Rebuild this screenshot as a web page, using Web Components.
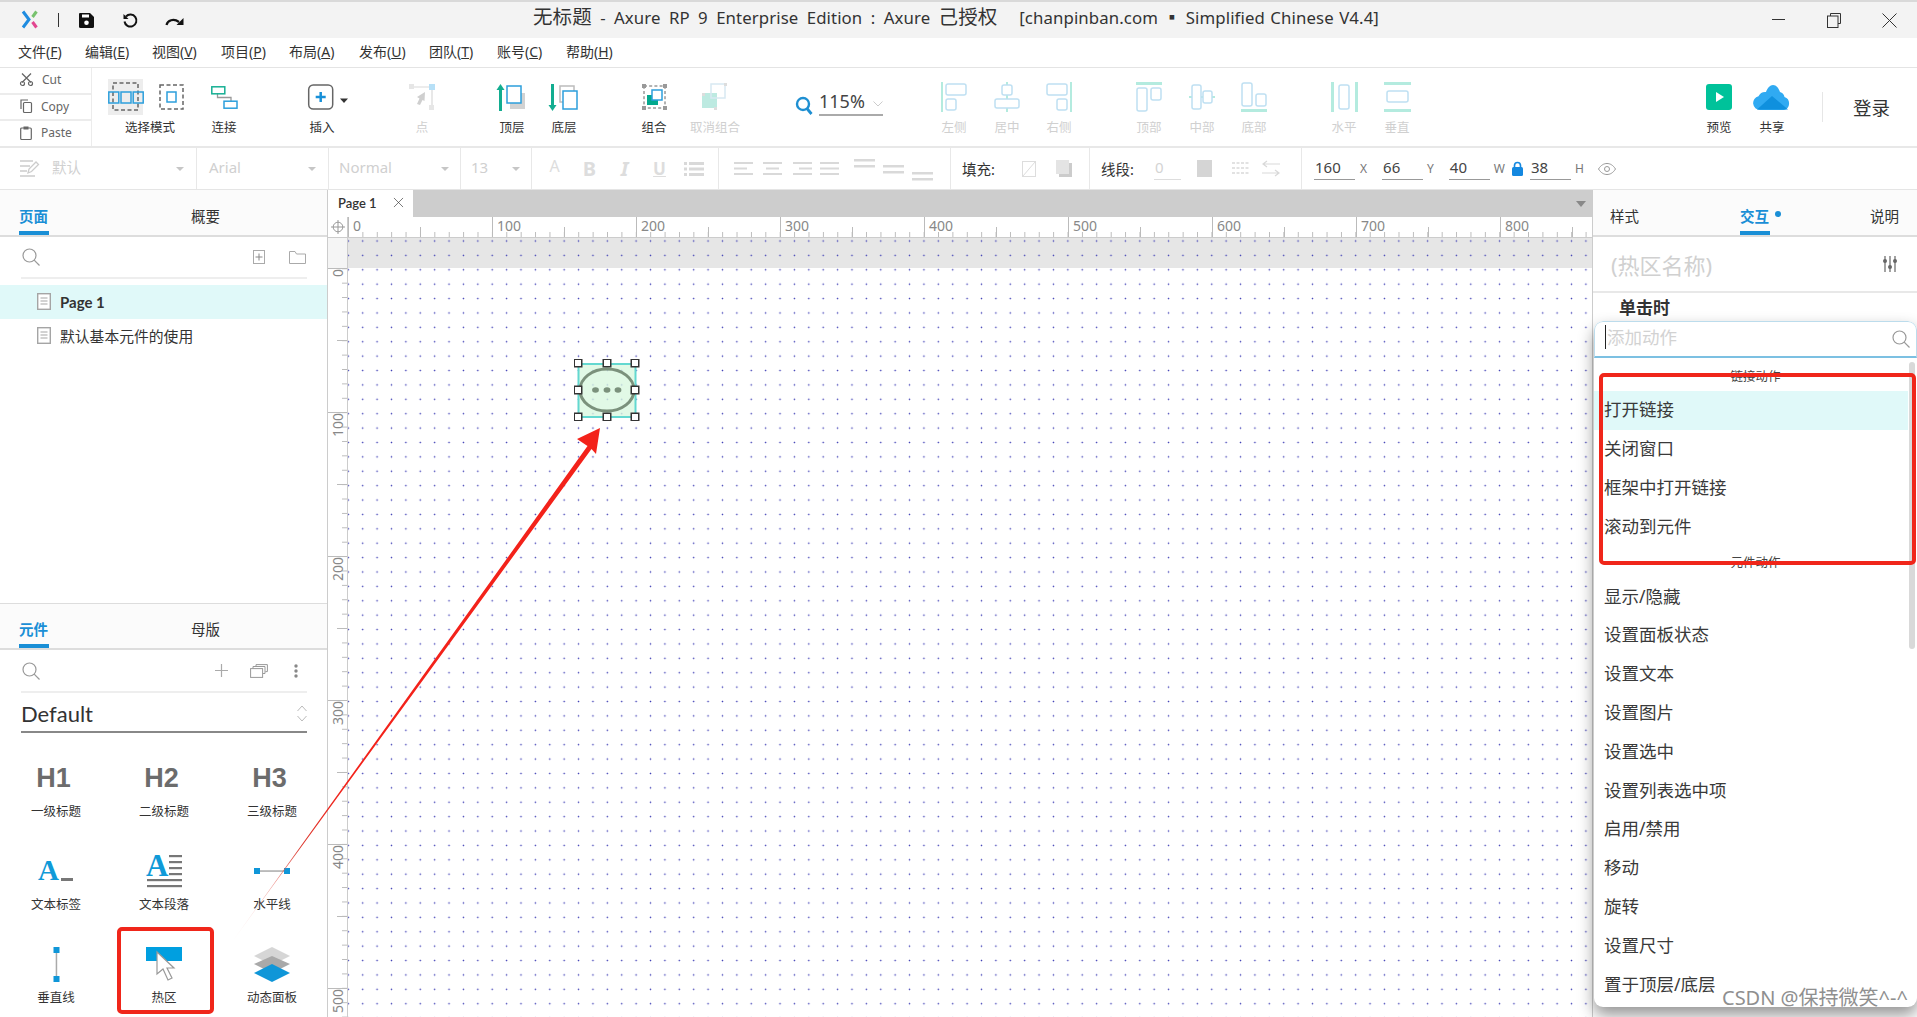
<!DOCTYPE html>
<html lang="zh-CN">
<head>
<meta charset="UTF-8">
<title>Axure RP 9</title>
<style>
  html, body { margin: 0; height: 100%; }
  body {
    width: 1917px; height: 1017px; overflow: hidden; background: #fff; position: relative;
    display: flex; flex-direction: column; color: #333;
    font-family: "Noto Sans", "Noto Sans CJK SC", sans-serif;
  }
  ax-main { flex: 1; min-height: 0; }
</style>
</head>
<body>
  <ax-titlebar></ax-titlebar>
  <ax-menubar></ax-menubar>
  <ax-toolbar></ax-toolbar>
  <ax-formatbar></ax-formatbar>
  <ax-main>
    <ax-left></ax-left>
    <ax-canvas></ax-canvas>
    <ax-right></ax-right>
  </ax-main>
  <ax-overlay></ax-overlay>

<script>
// icons: [width, height, svg body]
const T = '#b4ebdf', B = '#bfe0f2', G = '#d9d9d9';
const rect = (x, y, w, h, c, r = 1.5) => `<rect x="${x}" y="${y}" width="${w}" height="${h}" rx="${r}" fill="none" stroke="${c}" stroke-width="1.5"/>`;
const bar = (x, y, w, h, c) => `<rect x="${x}" y="${y}" width="${w}" height="${h}" fill="${c}"/>`;
const lines = (x, w, ys, c, t = 2) => ys.map(y => bar(x, y, w, t, c)).join('');
const ICONS = {
  logo: [17, 19, `<path d="M2 1.500 8 9.500 2 17.500" fill="none" stroke="#1f8ce0" stroke-width="3"/><path d="M15.500 1.500 11.500 7" stroke="#77c26e" stroke-width="3"/><path d="M11.500 12 15.500 17.500" stroke="#e2458f" stroke-width="3"/>`],
  save: [15, 15, `<path d="M1 0h10l4 4v9.500a1.500 1.500 0 0 1-1.500 1.500h-12A1.500 1.500 0 0 1 0 13.500V1a1 1 0 0 1 1-1z" fill="#111"/><rect x="3" y="1.500" width="7" height="3" fill="#fff"/><circle cx="7.500" cy="9.800" r="2.300" fill="#fff"/>`],
  undo: [16, 15, `<path d="M4 3.500a6 6 0 1 1-1.500 5" fill="none" stroke="#111" stroke-width="2"/><path d="M1.500 1v5h5z" fill="#111"/>`],
  redo: [19, 10, `<path d="M1.500 9c1-4.500 7-7 12.500-3" fill="none" stroke="#111" stroke-width="2.200"/><path d="M18.500 2v7h-7z" fill="#111"/>`],
  min: [13, 2, bar(0, 0, 13, 1, '#333')],
  max: [14, 15, `<path d="M3.500 3V.5h10v10H11" fill="none" stroke="#333"/><rect x=".5" y="3" width="10.500" height="11.500" fill="none" stroke="#333"/>`],
  close: [15, 15, `<path d="M.5.500l14 14M14.500.500l-14 14" stroke="#333"/>`],
  cut: [13, 13, `<path d="M2 .5l9 9M11 .5l-9 9" stroke="#666" stroke-width="1.300"/><circle cx="2.500" cy="10.500" r="2" fill="none" stroke="#666" stroke-width="1.200"/><circle cx="10.500" cy="10.500" r="2" fill="none" stroke="#666" stroke-width="1.200"/>`],
  copy: [12, 14, `<path d="M1 10V1h7" fill="none" stroke="#666" stroke-width="1.200"/><rect x="3.500" y="3.500" width="8" height="10" rx="1" fill="none" stroke="#666" stroke-width="1.200"/>`],
  paste: [12, 14, `<rect x=".7" y="2" width="10.600" height="11.500" rx="1" fill="none" stroke="#666" stroke-width="1.200"/><rect x="3.500" y=".5" width="5" height="3" fill="#666"/>`],
  selectA: [36, 30, `<rect x="5" y="1" width="25" height="27" fill="none" stroke="#666" stroke-width="1.500" stroke-dasharray="4 2.500"/>${rect(.8, 10, 10, 11, '#2c9fdc', 0)}${rect(13, 10, 10, 11, '#2c9fdc', 0)}${rect(25.200, 10, 10, 11, '#2c9fdc', 0)}`],
  selectB: [25, 26, `<rect x="1" y="1" width="23" height="24" fill="none" stroke="#666" stroke-width="1.500" stroke-dasharray="4 2.500"/>${rect(8, 8, 9, 10, '#2c9fdc', 0)}`],
  connect: [27, 23, `<path d="M6.500 7v4.500H20V16" fill="none" stroke="#999" stroke-width="1.300"/>${rect(.8, .8, 13, 7, '#17b094', 0)}${rect(13, 15.200, 13, 7, '#2c9fdc', 0)}`],
  insert: [52, 26, `<rect x="12.700" y="1" width="24" height="24" rx="4.500" fill="none" stroke="#666" stroke-width="1.500"/><path d="M24.700 8v10M19.700 13h10" stroke="#1890d8" stroke-width="2.500"/><path d="M44 14.500h8l-4 4.500z" fill="#333"/>`],
  point: [26, 26, `<path d="M3 3h20v20" fill="none" stroke="${G}" stroke-width="1.200"/>${bar(0, 0, 5, 5, '#e6e6e6')}${bar(20, 0, 6, 6, '#b7e0f7')}${bar(20, 21, 5, 5, '#e6e6e6')}<path d="M16 8 8 13l2.500 1.500L8 20l3 1 2.500-5 2 1z" fill="#cfcfcf"/>`],
  front: [28, 27, `${bar(1, 5, 3, 22, '#12ad90')}<path d="M2.500 0l4 6h-8z" fill="#12ad90"/><rect x="12" y="9" width="15" height="16" fill="#d2d2d2"/>${bar(9, 2, 14, 17, '#fff')}${rect(9, 2, 14, 17, '#2c9fdc', 0)}`],
  back: [28, 27, `${bar(1, 0, 3, 22, '#12ad90')}<path d="M2.500 27l4-6h-8z" fill="#12ad90"/>${rect(10, 2, 14, 16, '#bcbcbc', 0)}${bar(13, 7, 14, 18, '#fff')}${rect(13, 7, 14, 18, '#2c9fdc', 0)}`],
  group: [25, 26, `<rect x="2" y="2" width="21" height="22" fill="none" stroke="#666" stroke-dasharray="3 2.200"/>${bar(0, 0, 4, 4, '#999')}${bar(21, 0, 4, 4, '#999')}${bar(0, 22, 4, 4, '#999')}${bar(21, 22, 4, 4, '#999')}${bar(5, 11, 11, 10, '#03a98e')}${bar(10, 6, 10, 10, '#fff')}${rect(10, 6, 10, 10, '#2c9fdc', 0)}`],
  ungroup: [26, 28, `${bar(0, 10, 15, 15, '#bdeae1')}${rect(9, 1, 14, 14, '#d8e9f2', 0)}${bar(0, 10, 3, 3, '#ddd')}${bar(22, 0, 3, 3, '#ddd')}${bar(12, 24, 3, 3, '#ddd')}`],
  zoom: [18, 19, `<circle cx="8" cy="8" r="6" fill="none" stroke="#1e8fd2" stroke-width="2.400"/><path d="M12 12.500l4.500 5.500" stroke="#1e8fd2" stroke-width="2.800"/>`],
  chev: [10, 6, `<path d="M.5.500l4.500 4.500 4.500-4.500" fill="none" stroke="#ccc"/>`],
  aLeft: [26, 30, `${bar(0, 0, 2, 30, T)}${rect(5, 2, 20, 11, B, 2)}${rect(5, 17, 10, 11, B, 2)}`],
  aCenter: [26, 30, `${bar(12, 0, 2, 30, T)}${bar(8, 3, 10, 10, '#fff')}${rect(8, 3, 10, 10, B, 2)}${bar(1, 17, 24, 9, '#fff')}${rect(1, 17, 24, 9, B, 2)}`],
  aRight: [26, 30, `${bar(24, 0, 2, 30, T)}${rect(1, 2, 20, 11, B, 2)}${rect(11, 17, 10, 11, B, 2)}`],
  aTop: [26, 30, `${bar(0, 0, 26, 3, T)}${rect(1, 6, 10, 23, B, 2)}${rect(15, 6, 10, 12, B, 2)}`],
  aMid: [26, 30, `${bar(0, 14, 26, 2, T)}${bar(3, 3, 9, 24, '#fff')}${rect(3, 3, 9, 24, B, 2)}${bar(14, 9, 9, 12, '#fff')}${rect(14, 9, 9, 12, B, 2)}`],
  aBottom: [26, 30, `${bar(0, 27, 26, 3, T)}${rect(1, 1, 10, 23, B, 2)}${rect(15, 12, 10, 12, B, 2)}`],
  dH: [27, 30, `${bar(0, 0, 3, 30, T)}${bar(24, 0, 3, 30, T)}${rect(8, 3, 10, 24, B, 2)}`],
  dV: [27, 30, `${bar(0, 0, 27, 3, T)}${bar(0, 27, 27, 3, T)}${rect(3, 9, 21, 11, B, 2)}`],
  preview: [26, 26, `<rect width="26" height="26" rx="3" fill="#00c29a"/><path d="M10 8l8 5-8 5z" fill="#fff"/>`],
  share: [38, 26, `<path d="M7 26a7 7 0 0 1-1.500-13.800A7.500 7.500 0 0 1 13 8c1.500-4 4-7 7-7 3.500 0 5.500 3 7 7a6.500 6.500 0 0 1 4.500 5 6.800 6.800 0 0 1-.5 13z" fill="#30aaf2"/><path d="M4 25.500 19 12l16 13.500z" fill="#0f90de"/>`],
  style: [19, 19, `<path d="M0 2h13M0 7h10M0 12h7M0 17h15" stroke="#ccc" stroke-width="1.300"/><path d="M8 14l1-4 7-7 2.500 2.500-7 7z" fill="none" stroke="#ccc" stroke-width="1.300"/>`],
  fList: [20, 16, `${bar(0, 1, 3, 3, G)}${bar(0, 6.500, 3, 3, G)}${bar(0, 12, 3, 3, G)}${lines(5, 15, [1, 6.500, 12], G, 3)}`],
  al1: [19, 16, lines(0, 19, [1, 12], G, 2) + bar(0, 6.500, 13, 2, G)],
  al2: [19, 16, lines(0, 19, [1, 12], G, 2) + bar(3, 6.500, 13, 2, G)],
  al3: [19, 16, lines(0, 19, [1, 12], G, 2) + bar(6, 6.500, 13, 2, G)],
  al4: [19, 16, lines(0, 19, [1, 6.500, 12], G, 2)],
  vt: [21, 22, lines(0, 21, [1, 7], G, 2.500)],
  vm: [21, 22, lines(0, 21, [7, 13], G, 2.500)],
  vb: [21, 22, lines(0, 21, [14, 20], G, 2.500)],
  noFill: [14, 16, `<rect x=".5" y=".5" width="13" height="15" fill="none" stroke="#ddd"/><path d="M1 15 13 1" stroke="#ddd"/>`],
  fill: [16, 17, `<rect x="3" y="3" width="13" height="14" fill="#ccc"/><rect width="13" height="14" fill="#e4e4e4"/>`],
  lineC: [15, 17, bar(0, 0, 15, 17, '#d5d5d5')],
  dash: [18, 14, `<path d="M0 1h18M0 6h18M0 11h18" stroke="${G}" stroke-width="1.300" stroke-dasharray="3 1.500"/>`],
  arrows: [18, 15, `<path d="M18 3H2m3-3L1 3l4 3M0 12h16m-3-3 4 3-4 3" fill="none" stroke="${G}" stroke-width="1.200"/>`],
  lock: [11, 15, `<path d="M2.500 7V4.500a3 3 0 0 1 6 0V7" fill="none" stroke="#1488e0" stroke-width="1.600"/><rect y="6" width="11" height="9" rx="1.500" fill="#1488e0"/>`],
  eye: [18, 12, `<path d="M.5 6C3 2 6 .5 9 .5S15 2 17.500 6C15 10 12 11.500 9 11.500S3 10 .5 6z" fill="none" stroke="#999"/><circle cx="9" cy="6" r="2.500" fill="none" stroke="#999"/>`],
  search: [18, 18, `<circle cx="7.500" cy="7.500" r="6.500" fill="none" stroke="#999" stroke-width="1.200"/><path d="M12.200 12.200 17.500 17.500" stroke="#999" stroke-width="1.200"/>`],
  pageAdd: [12, 14, `<rect x=".5" y=".5" width="11" height="13" fill="none" stroke="#aaa"/><path d="M6 3.500v7M2.500 7h7" stroke="#888"/>`],
  folder: [17, 13, `<path d="M.5 12.500V.5h5.500l1.500 2.500h9v9.500z" fill="none" stroke="#aaa"/>`],
  doc: [14, 17, `<rect x=".7" y=".7" width="12.600" height="15.600" fill="#fff" stroke="#a5a5a5" stroke-width="1.400"/><path d="M3.500 5h7M3.500 8h7M3.500 11h7" stroke="#a5a5a5"/>`],
  target: [14, 14, `<circle cx="7" cy="7" r="4.800" fill="none" stroke="#999"/><path d="M7 0v14M0 7h14" stroke="#999"/>`],
  plus: [13, 13, `<path d="M6.500 0v13M0 6.500h13" stroke="#aaa" stroke-width="1.200"/>`],
  stack: [18, 14, `<rect x=".6" y="4.600" width="12" height="8.800" fill="none" stroke="#999"/><path d="M3 4.500v-2h12v7h-2M6 2.500V.6h11.400v7h-2" fill="none" stroke="#999"/>`],
  dots: [4, 14, `<circle cx="2" cy="2" r="1.700" fill="#888"/><circle cx="2" cy="7" r="1.700" fill="#888"/><circle cx="2" cy="12" r="1.700" fill="#888"/>`],
  updown: [10, 17, `<path d="M.5 6 5 1l4.500 5M.5 11 5 16l4.500-5" fill="none" stroke="#bbb"/>`],
  wLabel: [36, 22, `<text x="0" y="20" font-family="Liberation Serif" font-weight="700" font-size="29" fill="#0f9ad8">A</text>${bar(23, 18, 12, 3, '#777')}`],
  wPara: [37, 35, `<text x="0" y="22" font-family="Liberation Serif" font-weight="700" font-size="31" fill="#0f9ad8">A</text>${lines(23, 13, [1, 7, 13, 19], '#777', 2.200)}${lines(1, 35, [25, 31], '#777', 2.200)}`],
  wHLine: [36, 8, `${bar(2, 3.300, 32, 1.500, '#aaa')}${bar(0, 1, 6, 6, '#0f96d8')}${bar(30, 1, 6, 6, '#0f96d8')}`],
  wVLine: [7, 35, `${bar(2.700, 3, 1.500, 29, '#aaa')}${bar(.5, 0, 6, 6, '#0f96d8')}${bar(.5, 29, 6, 6, '#0f96d8')}`],
  wHot: [36, 35, `${bar(0, 0, 36, 14, '#009fe0')}<path d="M11 5v22l6-5 5 11 4-2-5-10h7z" fill="#fff" stroke="#999" stroke-width="1.200"/>`],
  wPanel: [36, 35, `<path d="M18 0 36 9 18 18 0 9z" fill="#d6d6d6"/><path d="M18 9 36 17 18 26 0 17z" fill="#a9a9a9"/><path d="M18 17 36 26 18 35 0 26z" fill="#0f96d8"/>`],
  sliders: [14, 16, `<path d="M2 0v16M7 0v16M12 0v16" stroke="#666" stroke-width="1.200"/><circle cx="2" cy="5" r="2" fill="#666"/><circle cx="7" cy="11" r="2" fill="#666"/><circle cx="12" cy="5" r="2" fill="#666"/>`]
};

class AxIcon extends HTMLElement {
  connectedCallback() {
    const [w, h, body] = ICONS[this.getAttribute('name')];
    this.attachShadow({ mode: 'open' }).innerHTML =
      `<style>:host{display:inline-flex;flex:none;line-height:0}svg{overflow:visible}</style>
       <svg width="${w}" height="${h}" viewBox="0 0 ${w} ${h}">${body}</svg>`;
  }
}
customElements.define('ax-icon', AxIcon);

class AxTitlebar extends HTMLElement {
  connectedCallback() {
    this.attachShadow({ mode: 'open' }).innerHTML = `
      <style>
        :host { display:flex; align-items:center; height:36px; background:#f3f3f3; border-top:2px solid #d9d9d9; position:relative; flex:none; }
        .sep { width:1px; height:14px; background:#333; margin:0 20px 0 20px; }
        .title { position:absolute; left:533px; top:0; font-size:16.800px; line-height:30px; white-space:pre; color:#333; word-spacing:1px; letter-spacing:.1px; }
        .title b { font-weight:400; font-size:19.500px; }
        .title span { word-spacing:3.900px; }
        .win { position:absolute; right:0; top:0; height:36px; display:flex; align-items:center; }
      </style>
      <ax-icon name="logo" style="margin-left:21px;margin-top:-1px"></ax-icon>
      <span class="sep"></span>
      <ax-icon name="save"></ax-icon>
      <ax-icon name="undo" style="margin-left:28px"></ax-icon>
      <ax-icon name="redo" style="margin-left:27px;margin-top:1px"></ax-icon>
      <div class="title"><b>无标题</b><span> - Axure RP 9 Enterprise Edition : Axure </span><b>己授权</b>    [chanpinban.com ▪ Simplified Chinese V4.4]</div>
      <div class="win">
        <ax-icon name="min"></ax-icon>
        <ax-icon name="max" style="margin-left:42px"></ax-icon>
        <ax-icon name="close" style="margin-left:41px;margin-right:20px"></ax-icon>
      </div>`;
  }
}
customElements.define('ax-titlebar', AxTitlebar);

class AxMenubar extends HTMLElement {
  connectedCallback() {
    const items = [['文件','F',67],['编辑','E',67],['视图','V',69],['项目','P',68],['布局','A',70],['发布','U',70],['团队','T',68],['账号','C',69],['帮助','H',60]];
    this.attachShadow({ mode: 'open' }).innerHTML = `
      <style>
        :host { display:flex; align-items:center; height:30px; padding:0 0 4px 18px; box-sizing:border-box; border-bottom:1px solid #e4e4e4; flex:none; font-size:14px; color:#333; }
        span { display:block; white-space:nowrap; }
      </style>
      ${items.map(([t, k, w]) => `<span style="width:${w}px">${t}(<u>${k}</u>)</span>`).join('')}`;
  }
}
customElements.define('ax-menubar', AxMenubar);

class AxTool extends HTMLElement {
  connectedCallback() {
    this.attachShadow({ mode: 'open' }).innerHTML = `
      <style>
        :host { display:flex; flex:none; flex-direction:column; align-items:center; width:52px; padding-top:11px; box-sizing:border-box; color:#333; }
        :host([off]) { color:#d0d0d0; }
        .ic { height:36px; display:flex; align-items:center; justify-content:center; width:100%; }
        .lb { font-size:12.500px; line-height:22px; white-space:nowrap; margin-top:2px; }
      </style>
      <div class="ic"><slot></slot></div>
      <div class="lb">${this.getAttribute('label')}</div>`;
  }
}
customElements.define('ax-tool', AxTool);

class AxToolbar extends HTMLElement {
  connectedCallback() {
    const tool = (label, icon, ml, off) => `<ax-tool label="${label}" ${off ? 'off' : ''} style="margin-left:${ml}px"><ax-icon name="${icon}"></ax-icon></ax-tool>`;
    this.attachShadow({ mode: 'open' }).innerHTML = `
      <style>
        :host { display:flex; height:78px; flex:none; border-bottom:2px solid #e8e8e8; box-sizing:content-box; }
        .clip { width:91px; border-right:1px solid #ececec; display:flex; flex-direction:column; flex:none; }
        .clip div { flex:1; display:flex; align-items:center; gap:9px; padding:0 0 2px 20px; font-size:12px; color:#666; border-bottom:2px solid #ececec; }
        .clip div:last-child { border-bottom:0; }
        .sel { display:flex; align-items:center; width:100%; }
        .on { width:35px; height:36px; background:#ededed; display:flex; align-items:center; justify-content:center; }
        .zoom { width:90px; margin-left:45px; display:flex; padding:20px 0 0 0; box-sizing:border-box; align-items:flex-start; flex:none; }
        .zv { margin-left:6px; width:64px; border-bottom:2px solid #aaa; font-size:18px; line-height:24px; height:26px; color:#444; display:flex; justify-content:space-between; align-items:center; }
        .div { width:1px; height:30px; background:#e6e6e6; margin:24px 0 0 24px; flex:none; }
        .login { font-size:18.500px; margin:27px 0 0 30px; line-height:26px; color:#333; white-space:nowrap; }
      </style>
      <div class="clip">
        <div><ax-icon name="cut"></ax-icon>Cut</div>
        <div><ax-icon name="copy"></ax-icon>Copy</div>
        <div><ax-icon name="paste"></ax-icon>Paste</div>
      </div>
      <ax-tool label="选择模式" style="width:84px;margin-left:16px">
        <div class="sel">
          <span class="on"><ax-icon name="selectA"></ax-icon></span>
          <ax-icon name="selectB" style="margin-left:16px"></ax-icon>
        </div>
      </ax-tool>
      ${tool('连接', 'connect', 6)}
      ${tool('插入', 'insert', 46)}
      ${tool('点', 'point', 48, 1)}
      ${tool('顶层', 'front', 38)}
      ${tool('底层', 'back', 0)}
      ${tool('组合', 'group', 38)}
      <ax-tool label="取消组合" off style="width:70px"><ax-icon name="ungroup"></ax-icon></ax-tool>
      <div class="zoom"><ax-icon name="zoom" style="margin-top:8px"></ax-icon><div class="zv">115%<ax-icon name="chev" style="margin-top:6px"></ax-icon></div></div>
      ${tool('左侧', 'aLeft', 43, 1)}${tool('居中', 'aCenter', 1, 1)}${tool('右侧', 'aRight', 0, 1)}
      ${tool('顶部', 'aTop', 38, 1)}${tool('中部', 'aMid', 1, 1)}${tool('底部', 'aBottom', 0, 1)}
      ${tool('水平', 'dH', 38, 1)}${tool('垂直', 'dV', 1, 1)}
      ${tool('预览', 'preview', 270)}${tool('共享', 'share', 1)}
      <span class="div"></span>
      <span class="login">登录</span>`;
  }
}
customElements.define('ax-toolbar', AxToolbar);

class AxField extends HTMLElement {
  connectedCallback() {
    this.attachShadow({ mode: 'open' }).innerHTML = `
      <style>
        :host { display:flex; flex:none; align-items:center; }
        :host([off]) .v { color:#d4d4d4; border-color:#ddd; }
        .v { width:var(--w,41px); border-bottom:1px solid #999; font-size:15px; line-height:22px; height:24px; color:#444; padding-left:1px; box-sizing:border-box; margin-top:-1px; }
        .l { font-size:12px; color:#777; margin-left:var(--lm,6px); }
      </style>
      <div class="v">${this.getAttribute('value')}</div><div class="l">${this.getAttribute('label') || ''}</div>`;
  }
}
customElements.define('ax-field', AxField);

class AxFormatbar extends HTMLElement {
  connectedCallback() {
    const ic = (n, ml) => `<ax-icon name="${n}" style="margin-left:${ml}px"></ax-icon>`;
    const tri = '<i class="tri"></i>';
    this.attachShadow({ mode: 'open' }).innerHTML = `
      <style>
        :host { display:flex; height:42px; flex:none; border-bottom:1px solid #e5e5e5; box-sizing:border-box; color:#d0d0d0; font-size:15px; }
        .c { display:flex; align-items:center; border-right:1px solid #e8e8e8; box-sizing:border-box; flex:none; height:100%; position:relative; }
        .tx { display:block; margin-top:-4px; white-space:nowrap; }
        .tri { width:0; height:0; border:4px solid transparent; border-top:4px solid #c6c6c6; border-bottom:0; margin-left:auto; }
        .lb { color:#333; font-size:14.500px; white-space:nowrap; }
        b { font:700 20px "Noto Sans",sans-serif; color:#ddd; width:35px; text-align:center; flex:none; }
      </style>
      <div class="c" style="width:197px;padding:0 12px 0 20px">${ic('style', 0)}<span class="tx" style="margin-left:13px;font-size:14.500px">默认</span>${tri}</div>
      <div class="c" style="width:132px;padding:0 12px"><span class="tx">Arial</span>${tri}</div>
      <div class="c" style="width:132px;padding:0 11px 0 10px"><span class="tx">Normal</span>${tri}</div>
      <div class="c" style="width:71px;padding:0 11px 0 10px"><span class="tx">13</span>${tri}</div>
      <div class="c" style="width:187px;padding-left:5px">
        <b style="font-weight:400;font-size:16px;margin-top:-6px">A</b><b>B</b><b style="font-style:italic">I</b><b style="text-decoration:underline;font-size:17px">U</b>
        ${ic('fList', 7)}
      </div>
      <div class="c" style="width:232px;padding-left:15px">
        ${ic('al1', 0)}${ic('al2', 10)}${ic('al3', 11)}${ic('al4', 8)}
        ${ic('vt', 15)}${ic('vm', 8)}${ic('vb', 8)}
      </div>
      <div class="c" style="width:139px;padding-left:11px"><span class="lb">填充:</span>${ic('noFill', 27)}${ic('fill', 20)}</div>
      <div class="c" style="width:212px;padding-left:11px">
        <span class="lb">线段:</span>
        <ax-field off value="0" style="--w:27px;margin-left:20px;--lm:0"></ax-field>
        ${ic('lineC', 16)}${ic('dash', 20)}${ic('arrows', 12)}
      </div>
      <div class="c" style="border:0;padding-left:12px">
        <ax-field value="160" label="X" style="--lm:5px"></ax-field>
        <ax-field value="66" label="Y" style="margin-left:15px;--lm:4px"></ax-field>
        <ax-field value="40" label="W" style="margin-left:15px;--lm:4px"></ax-field>
        ${ic('lock', 7)}
        <ax-field value="38" label="H" style="margin-left:7px;--lm:4px"></ax-field>
        ${ic('eye', 14)}
      </div>`;
  }
}
customElements.define('ax-formatbar', AxFormatbar);

class AxMain extends HTMLElement {
  connectedCallback() {
    this.attachShadow({ mode: 'open' }).innerHTML =
      `<style>:host{display:flex;position:relative}</style><slot></slot>`;
  }
}
customElements.define('ax-main', AxMain);

class AxTabs extends HTMLElement {
  connectedCallback() {
    const names = this.getAttribute('tabs').split(',');
    const on = +this.getAttribute('active');
    const pad = this.getAttribute('pad');
    const gap = this.getAttribute('gap');
    const h = +(this.getAttribute('h') || 45);
    this.attachShadow({ mode: 'open' }).innerHTML = `
      <style>
        :host { display:flex; height:${h}px; background:#fbfbfb; border-bottom:2px solid #ddd; box-sizing:content-box; flex:none; padding-left:${pad}px; gap:${gap}px; font-size:14.500px; color:#333; }
        span { display:flex; align-items:center; height:${h}px; width:30px; white-space:nowrap; box-sizing:border-box; position:relative; padding-top:5px; }
        span.on { color:#1a8fd6; font-weight:700; }
        span.on::after { content:""; position:absolute; left:0; right:0; bottom:0; height:4px; background:#1a8fd6; }
        span.on i { position:absolute; left:35px; top:21px; width:6px; height:6px; background:#1a8fd6; border-radius:50%; }
      </style>
      ${names.map((n, i) => `<span class="${i === on ? 'on' : ''}">${n}${i === on && this.hasAttribute('dot') ? '<i></i>' : ''}</span>`).join('')}`;
  }
}
customElements.define('ax-tabs', AxTabs);

class AxPageRow extends HTMLElement {
  connectedCallback() {
    this.attachShadow({ mode: 'open' }).innerHTML = `
      <style>
        :host { display:flex; align-items:center; height:33.500px; padding-left:37px; font-size:14.800px; color:#333; }
        :host([sel]) { background:#e0f9f9; font-weight:700; font-size:15px; font-family:"Lato","Noto Sans CJK SC",sans-serif; }
        span { margin-left:9px; position:relative; top:0; }
      </style>
      <ax-icon name="doc"></ax-icon><span><slot></slot></span>`;
  }
}
customElements.define('ax-page-row', AxPageRow);

class AxWidget extends HTMLElement {
  connectedCallback() {
    this.attachShadow({ mode: 'open' }).innerHTML = `
      <style>
        :host { display:flex; flex-direction:column; align-items:center; height:93px; }
        .ic { height:46px; display:flex; align-items:center; justify-content:center; }
        .lb { font-size:12.500px; line-height:22px; color:#333; white-space:nowrap; }
      </style>
      <div class="ic"><slot></slot></div><div class="lb">${this.getAttribute('label')}</div>`;
  }
}
customElements.define('ax-widget', AxWidget);

class AxLeft extends HTMLElement {
  connectedCallback() {
    const h = t => `<span class="h">${t}</span>`;
    const w = (label, inner) => `<ax-widget label="${label}">${inner}</ax-widget>`;
    const i = n => `<ax-icon name="${n}"></ax-icon>`;
    this.attachShadow({ mode: 'open' }).innerHTML = `
      <style>
        :host { display:flex; flex-direction:column; width:328px; flex:none; border-right:1px solid #ccc; box-sizing:border-box; }
        .pages { height:413px; flex:none; }
        .bar { display:flex; align-items:center; height:40px; margin:0 20px 6px 21px; border-bottom:2px solid #eee; padding-left:1px; box-sizing:content-box; }
        .bar .sp { flex:1; }
        .widgets { flex:1; border-top:1px solid #ddd; box-sizing:border-box; }
        .lib { display:flex; justify-content:space-between; align-items:center; margin:0 20px 0 21px; height:40px; padding-top:3px; border-bottom:2px solid #888; font:22px/37px "Lato",sans-serif; color:#333; box-sizing:border-box; }
        .grid { display:grid; grid-template-columns:repeat(3,108px); margin:22px 0 0 2px; }
        .h { font:700 27px/46px "Liberation Sans",sans-serif; color:#6c6c6c; margin-left:-5px; }
      </style>
      <div class="pages">
        <ax-tabs tabs="页面,概要" active="0" pad="19" gap="142"></ax-tabs>
        <div class="bar">${i('search')}<span class="sp"></span><ax-icon name="pageAdd"></ax-icon><ax-icon name="folder" style="margin:0 1px 0 24px"></ax-icon></div>
        <ax-page-row sel>Page 1</ax-page-row>
        <ax-page-row>默认基本元件的使用</ax-page-row>
      </div>
      <div class="widgets">
        <ax-tabs tabs="元件,母版" active="0" pad="19" gap="142" h="44"></ax-tabs>
        <div class="bar" style="margin-bottom:0;height:41px">${i('search')}<span class="sp"></span><ax-icon name="plus"></ax-icon><ax-icon name="stack" style="margin-left:22px"></ax-icon><ax-icon name="dots" style="margin:0 9px 0 26px"></ax-icon></div>
        <div class="lib">Default<ax-icon name="updown"></ax-icon></div>
        <div class="grid">
          ${w('一级标题', h('H1'))}${w('二级标题', h('H2'))}${w('三级标题', h('H3'))}
          ${w('文本标签', i('wLabel'))}${w('文本段落', i('wPara'))}${w('水平线', i('wHLine'))}
          ${w('垂直线', i('wVLine'))}${w('热区', i('wHot'))}${w('动态面板', i('wPanel'))}
        </div>
      </div>`;
  }
}
customElements.define('ax-left', AxLeft);

class AxCanvas extends HTMLElement {
  connectedCallback() {
    const hr = [0,100,200,300,400,500,600,700,800].map(n => `<div class="hc">${n}</div>`).join('');
    const vr = [0,100,200,300,400,500].map(n => `<div class="vc"><span>${n}</span></div>`).join('');
    this.attachShadow({ mode: 'open' }).innerHTML = `
      <style>
        :host { display:flex; flex-direction:column; flex:1; min-width:0; border-right:1px solid #ccc; box-sizing:border-box; overflow:hidden; }
        .strip { display:flex; height:27px; background:#cdcdcd; flex:none; position:relative; }
        .tab { width:85px; background:#fff; display:flex; align-items:center; font:600 13px "Lato",sans-serif; color:#333; padding:0 0 2px 10px; box-sizing:border-box; position:relative; }
        .tab ax-icon { margin-left:auto; margin-right:7px; }
        .strip .dd { position:absolute; right:6px; top:11px; border:5px solid transparent; border-top:6px solid #888; border-bottom:0; }
        .hruler { display:flex; height:20px; flex:none; border-bottom:1px solid #ccc; box-sizing:content-box; background:#fff; }
        .corner { width:20px; flex:none; display:flex; align-items:center; justify-content:center; border-right:1px solid #ccc; box-sizing:border-box; }
        .ticks { flex:1; display:flex; overflow:hidden;
          background:
            linear-gradient(90deg,#bbb 1px,transparent 1px) 72px 100%/144px 10px repeat-x,
            linear-gradient(90deg,#bbb 1px,transparent 1px) 0 100%/14.400px 5px repeat-x; }
        .hc { width:144px; flex:none; box-sizing:border-box; border-left:1px solid #bbb; padding-left:4px; font-size:14px; line-height:18px; color:#888; }
        .body { flex:1; display:flex; min-height:0; }
        .vruler { width:20px; flex:none; border-right:1px solid #ccc; box-sizing:border-box; overflow:hidden; padding-top:30px;
          background:
            linear-gradient(#f5f5f5,#f5f5f5) 0 0/100% 30px no-repeat,
            linear-gradient(#bbb 1px,transparent 1px) 100% 102px/10px 144px repeat-y,
            linear-gradient(#bbb 1px,transparent 1px) 100% 1.500px/5px 14.400px repeat-y; }
        .vc { height:144px; box-sizing:border-box; border-top:1px solid #bbb; font-size:14px; color:#888; display:flex; }
        .vc span { writing-mode:vertical-rl; transform:rotate(180deg); width:19px; height:30px; text-align:right; line-height:19px; }
        .paper { flex:1; position:relative; overflow:hidden;
          background:
            radial-gradient(circle,#3c3cb4 .7px,transparent 1.050px) -6.900px -4.200px/14.400px 14.400px,
            linear-gradient(#e6e6e6,#e6e6e6) 0 0/100% 30px no-repeat, #fff; }
      </style>
      <div class="strip"><div class="tab">Page 1<ax-icon name="close" style="transform:scale(.65)"></ax-icon></div><i class="dd"></i></div>
      <div class="hruler"><div class="corner"><ax-icon name="target"></ax-icon></div><div class="ticks">${hr}</div></div>
      <div class="body">
        <div class="vruler">${vr}</div>
        <div class="paper"><ax-hotspot></ax-hotspot></div>
      </div>`;
  }
}
customElements.define('ax-canvas', AxCanvas);

// the selected hot area, placed on the free canvas
class AxHotspot extends HTMLElement {
  connectedCallback() {
    this.attachShadow({ mode: 'open' }).innerHTML = `
      <style>:host{position:absolute;left:226px;top:121px;width:66px;height:62px;line-height:0}</style>
      <svg width="66" height="62" viewBox="0 0 66 62">
        <rect x="4.500" y="5" width="57" height="53" fill="#d7f7dd" fill-opacity=".75" stroke="#63d8d0" stroke-width="2"/>
        <ellipse cx="33" cy="31" rx="27" ry="21" fill="none" stroke="#7b917c" stroke-width="3"/>
        <ellipse cx="21.500" cy="31" rx="3.400" ry="2.800" fill="#7b917c"/><ellipse cx="33" cy="31" rx="3.400" ry="2.800" fill="#7b917c"/><ellipse cx="44" cy="31" rx="3.400" ry="2.800" fill="#7b917c"/>
        ${[[4,4],[33,4],[61,4],[4,31],[61,31],[4,58],[33,58],[61,58]].map(([x, y]) => `<rect x="${x-3.750}" y="${y-3.750}" width="7.500" height="7.500" fill="#fff" stroke="#333" stroke-width="1.500"/>`).join('')}
      </svg>`;
  }
}
customElements.define('ax-hotspot', AxHotspot);

class AxActionItem extends HTMLElement {
  connectedCallback() {
    this.attachShadow({ mode: 'open' }).innerHTML = `
      <style>
        :host { display:flex; align-items:center; height:38.800px; padding:0 0 3px 10px; width:314px; box-sizing:border-box; font-size:17.500px; color:#3a3a3a; white-space:nowrap; }
        :host([hot]) { background:#e0f9f9; }
      </style><slot></slot>`;
  }
}
customElements.define('ax-action-item', AxActionItem);

class AxActionHead extends HTMLElement {
  connectedCallback() {
    this.attachShadow({ mode: 'open' }).innerHTML = `
      <style>:host { display:flex; align-items:center; justify-content:center; width:323px; font-size:12.500px; color:#444; box-sizing:border-box; }</style><slot></slot>`;
  }
}
customElements.define('ax-action-head', AxActionHead);

class AxPopup extends HTMLElement {
  connectedCallback() {
    const it = t => `<ax-action-item>${t}</ax-action-item>`;
    this.attachShadow({ mode: 'open' }).innerHTML = `
      <style>
        :host { position:absolute; left:1px; top:131px; width:323px; height:686px; background:#fff; border-radius:9px; box-shadow:0 8px 16px rgba(0,0,0,.42); overflow:hidden; display:block; z-index:2; }
        .in { display:flex; align-items:center; height:37px; border:1px solid #bcdcec; border-bottom:2px solid #7cc0e2; border-radius:9px 9px 0 0; box-sizing:border-box; padding:0 6px 5px 10px; font-size:17.500px; color:#d2d2d2; }
        .in i { width:1px; height:24px; background:#222; margin-right:1px; }
        .in ax-icon { margin-left:auto; margin-top:5px; }
        .sb { position:absolute; right:2px; top:41px; width:6px; height:287px; background:#d9d9d9; border-radius:3px; }
      </style>
      <div class="in"><i></i>添加动作<ax-icon name="search"></ax-icon></div>
      <ax-action-head style="height:33px;padding-top:2px">链接动作</ax-action-head>
      <ax-action-item hot>打开链接</ax-action-item>
      ${['关闭窗口','框架中打开链接','滚动到元件'].map(it).join('')}
      <ax-action-head style="height:31px">元件动作</ax-action-head>
      ${['显示/隐藏','设置面板状态','设置文本','设置图片','设置选中','设置列表选中项','启用/禁用','移动','旋转','设置尺寸','置于顶层/底层'].map(it).join('')}
      <div class="sb"></div>`;
  }
}
customElements.define('ax-popup', AxPopup);

class AxRight extends HTMLElement {
  connectedCallback() {
    this.attachShadow({ mode: 'open' }).innerHTML = `
      <style>
        :host { display:flex; flex-direction:column; width:324px; flex:none; position:relative; background:#fff; }
        .name { display:flex; align-items:center; justify-content:space-between; height:54px; border-bottom:2px solid #e8e8e8; box-sizing:content-box; padding:0 20px 0 18px; font-size:22px; color:#d0d0d0; flex:none; }
        .ev { font-size:17px; font-weight:700; color:#333; padding-left:26px; line-height:30px; }
      </style>
      <ax-tabs tabs="样式,交互,说明" active="1" pad="17" gap="100" dot></ax-tabs>
      <div class="name">(热区名称)<ax-icon name="sliders"></ax-icon></div>
      <div class="ev">单击时</div>
      <ax-popup></ax-popup>`;
  }
}
customElements.define('ax-right', AxRight);

// annotations over the whole screenshot: red arrow, red boxes, watermark
class AxOverlay extends HTMLElement {
  connectedCallback() {
    this.attachShadow({ mode: 'open' }).innerHTML = `
      <style>
        :host { position:absolute; inset:0; pointer-events:none; z-index:5; display:block; }
        svg { position:absolute; left:0; top:0; }
        .box { position:absolute; border:4px solid #f0261a; border-radius:5px; box-sizing:border-box; }
        .mark { position:absolute; left:1722px; top:983px; font-size:20px; line-height:30px; color:#8f8f8f; white-space:nowrap; text-shadow:0 0 1px #fff; }
      </style>
      <svg width="1917" height="1017" viewBox="0 0 1917 1017">
        <defs><linearGradient id="fade" x1="232" y1="942" x2="345" y2="784" gradientUnits="userSpaceOnUse">
          <stop offset="0" stop-color="#f4b5b0" stop-opacity=".2"/><stop offset=".6" stop-color="#dc3a30"/><stop offset="1" stop-color="#f3221a"/>
        </linearGradient></defs>
        <path d="M232 942 587.500 446 577 439 600 428 596 454 591.500 449Z" fill="url(#fade)"/>
      </svg>
      <div class="box" style="left:117px;top:927px;width:97px;height:87px"></div>
      <div class="box" style="left:1599px;top:373px;width:317px;height:192px"></div>
      <div class="mark">CSDN @保持微笑^-^</div>`;
  }
}
customElements.define('ax-overlay', AxOverlay);
</script>
</body>
</html>
